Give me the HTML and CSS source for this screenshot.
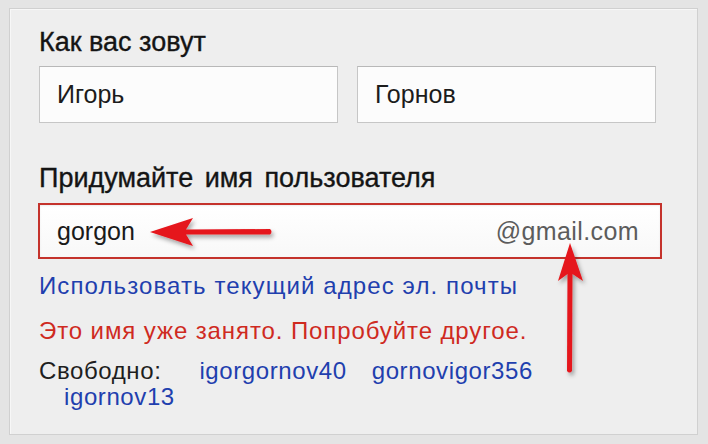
FILE: index.html
```html
<!DOCTYPE html>
<html lang="ru">
<head>
<meta charset="utf-8">
<title>Регистрация</title>
<link rel="stylesheet" href="styles.css">
</head>
<body>
<div class="card">
  <div class="label label-name">Как вас зовут</div>
  <div class="name-row">
    <div class="field">Игорь</div>
    <div class="field">Горнов</div>
  </div>
  <div class="label label-user">Придумайте имя пользователя</div>
  <div class="user-field">
    <span class="user-value">gorgon</span>
    <span class="domain">@gmail.com</span>
  </div>
  <div class="link-line"><a class="link">Использовать текущий адрес эл. почты</a></div>
  <div class="error-line">Это имя уже занято. Попробуйте другое.</div>
  <div class="free-line"><span class="free-label">Свободно:</span><a class="link free-link">igorgornov40</a><a class="link free-link">gornovigor356</a><a class="link free-link">igornov13</a></div>
</div>
<svg class="annotations" width="708" height="444" viewBox="0 0 708 444">
  <defs>
    <filter id="sh" x="-20%" y="-20%" width="140%" height="140%">
      <feDropShadow dx="2" dy="3" stdDeviation="2" flood-color="#000" flood-opacity="0.35"/>
    </filter>
  </defs>
  <g fill="#e5141b" filter="url(#sh)">
    <path d="M150 232 L193 218 L186 229.5 L270 229 Q273 231.5 270 234.5 L186 234.5 L193 246 Z"/>
    <path d="M570 243 L583 281 L572.5 274 L572 371 Q569.5 374 567 371 L567.5 274 L558 281 Z"/>
  </g>
</svg>
</body>
</html>
```
FILE: styles.css
```css
html, body {
  margin: 0;
  padding: 0;
}
body {
  width: 708px;
  height: 444px;
  background: #e4e4e4;
  padding: 8px 10px 9px 9px;
  box-sizing: border-box;
  font-family: "Liberation Sans", Arial, sans-serif;
  position: relative;
  overflow: hidden;
}
.card {
  height: 100%;
  box-sizing: border-box;
  border: 1px solid #d0d0d0;
  background: #eeeeee;
  padding: 17px 0 0 29px;
  box-shadow: inset 1px 1px 0 #f7f7f7;
}
.label {
  font-size: 27px;
  line-height: 32px;
  color: #141414;
  -webkit-text-stroke: 0.35px #141414;
}
.name-row {
  display: flex;
  gap: 19px;
  margin-top: 8px;
}
.field {
  width: 299px;
  height: 57px;
  box-sizing: border-box;
  border: 1px solid #c6c6c6;
  border-top-color: #b8b8b8;
  background: #fcfcfc;
  display: flex;
  align-items: center;
  padding-left: 17px;
  font-size: 25px;
  color: #1c1c1c;
}
.label-user {
  margin-top: 39px;
  word-spacing: 4px;
}
.user-field {
  margin-top: 9px;
  margin-left: -1px;
  width: 624px;
  height: 56px;
  box-sizing: border-box;
  border: 2px solid #c4322b;
  background: linear-gradient(#ffffff, #f8f8f8);
  box-shadow: inset 0 1px 2px rgba(0,0,0,0.08);
  display: flex;
  align-items: center;
  justify-content: space-between;
  padding: 0 21px 0 17px;
}
.user-value {
  font-size: 25px;
  color: #1a1a1a;
}
.domain {
  font-size: 25px;
  color: #5c5c5c;
  letter-spacing: 0.4px;
}
.link-line {
  margin-top: 12px;
  font-size: 24px;
  line-height: 30px;
  letter-spacing: 1.1px;
}
.link {
  color: #1f3fae;
  text-decoration: none;
}
.error-line {
  margin-top: 15px;
  font-size: 24px;
  line-height: 30px;
  color: #cf2a1f;
  letter-spacing: 0.9px;
}
.free-line {
  margin-top: 12px;
  font-size: 24px;
  line-height: 26px;
  letter-spacing: 0.6px;
  width: 520px;
  color: #1e1e1e;
}
.free-label {
  margin-right: 13px;
}
.free-link {
  display: inline-block;
  margin-left: 25px;
}
.annotations {
  position: absolute;
  left: 0;
  top: 0;
  pointer-events: none;
}
```
